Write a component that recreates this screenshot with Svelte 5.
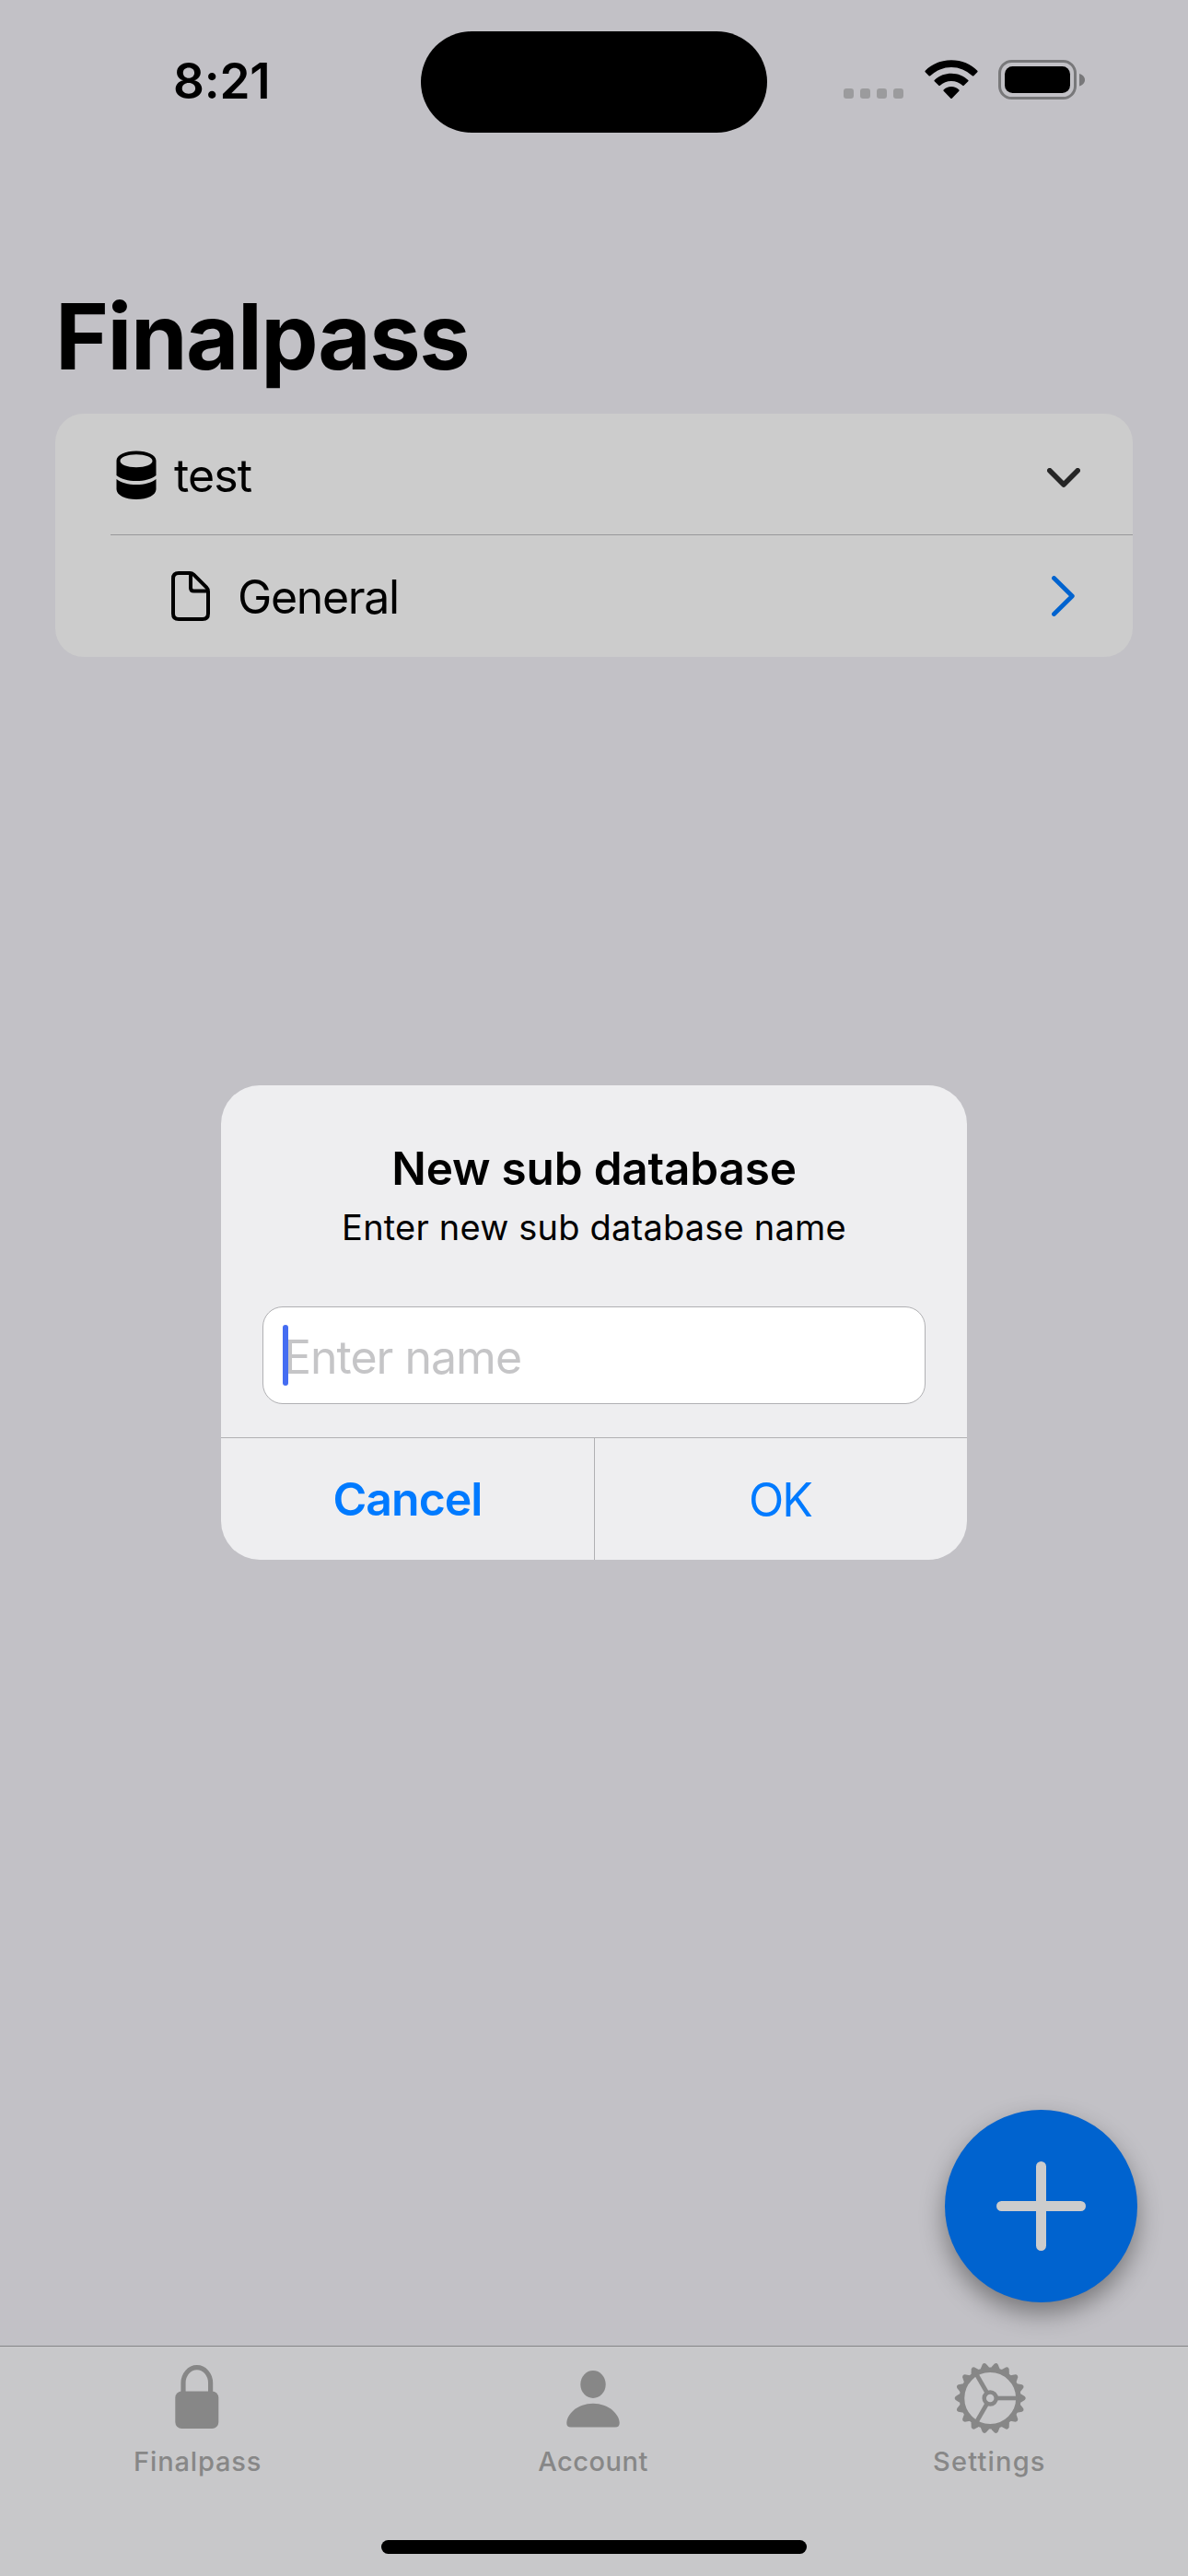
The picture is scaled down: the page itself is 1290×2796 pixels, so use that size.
<script>
  const tabs = ['Finalpass', 'Account', 'Settings'];
  const teeth = Array.from({ length: 18 }, (_, i) => i * 20);
  const spokes = [0, 120, 240];
</script>

<main class="screen">
  <header class="status">
    <time class="clock">8:21</time>
    <div class="island"></div>
    <div class="indicators">
      <svg class="cell" viewBox="0 0 65 11">
        {#each [0, 18, 36, 54] as x}
          <rect {x} y="0" width="11" height="11" rx="3.2" />
        {/each}
      </svg>
      <svg class="wifi" viewBox="0 0 58 43">
        <path d="M29 .2C40.300 .2 50.500 4.600 57.300 11.700Q58 12.500 57.300 13.200L53.400 17.200Q52.600 18 51.800 17.200A33 33 0 0 0 6.200 17.200Q5.400 18 4.600 17.200L.7 13.200Q0 12.500 .7 11.700C7.500 4.600 17.700 .2 29 .2Z" />
        <path d="M29 14.700C36.300 14.700 42.800 17.500 47.300 21.900Q48 22.600 47.300 23.300L42.700 27.800Q42 28.500 41.200 27.800A17.800 17.800 0 0 0 16.800 27.800Q16 28.500 15.300 27.800L10.700 23.300Q10 22.600 10.700 21.900C15.200 17.500 21.700 14.700 29 14.700Z" />
        <path d="M29 29C32.300 29 35.300 30.300 37.400 32.400Q38 33 37.400 33.700L29.700 41.700Q29 42.300 28.300 41.700L20.600 33.700Q20 33 20.600 32.400C22.700 30.300 25.700 29 29 29Z" />
      </svg>
      <svg class="battery" viewBox="0 0 94 43">
        <rect x="1.500" y="1.500" width="82" height="40" rx="13" fill="none" stroke="#78787a" stroke-width="3" />
        <rect x="7" y="7" width="71" height="29" rx="8.500" />
        <path d="M88 15C91.500 16 94 18.500 94 21.700S91.500 27.400 88 28.500Z" fill="#78787a" />
      </svg>
    </div>
  </header>

  <h1>Finalpass</h1>

  <section class="card">
    <div class="row">
      <svg class="database" viewBox="0 0 44 53">
        <path fill-rule="evenodd" d="M.5 11C.5 5 10 .5 22 .5S43.500 5 43.500 11V27C38 31 31 33 22 33S6 31 .5 27ZM22 4.200C12 4.200 4.500 7.200 4.500 11.200S12 18.200 22 18.200 39.500 15.200 39.500 11.200 32 4.200 22 4.200Z" />
        <path d="M.5 31C6 35 13 37 22 37S38 35 43.500 31V42C43.500 48.500 34 53 22 53S.5 48.500 .5 42Z" />
      </svg>
      <span class="label">test</span>
      <svg class="down" viewBox="0 0 36 21">
        <path d="M2.800 2.800L18 18L33.200 2.800" />
      </svg>
    </div>
    <hr />
    <div class="row child">
      <svg class="document" viewBox="0 0 42 54">
        <path d="M8 2H20Q22.500 2 24.300 3.700L38.300 17.700Q40 19.400 40 22V46Q40 52 34 52H8Q2 52 2 46V8Q2 2 8 2Z" />
        <path d="M21 3V18Q21 21.500 24.500 21.500H39" />
      </svg>
      <span class="label">General</span>
      <svg class="next" viewBox="0 0 25 44">
        <path d="M2.500 2.500L22.300 22L2.500 41.500" />
      </svg>
    </div>
  </section>

  <button class="add" aria-label="Add">
    <svg viewBox="0 0 97 97"><path d="M48.500 5.500V91.500M5.500 48.500H91.500" /></svg>
  </button>

  <nav>
    {#each tabs as tab}
      <a href="#{tab}" class="tab {tab.toLowerCase()}">
        {#if tab === 'Finalpass'}
          <svg viewBox="0 0 84 84">
            <path d="M26 36V23.500A14.800 16.800 0 0 1 55.600 23.500V36" fill="none" stroke="currentColor" stroke-width="5.200" />
            <rect x="17.300" y="32.500" width="47" height="40.500" rx="7" />
          </svg>
        {:else if tab === 'Account'}
          <svg viewBox="0 0 84 84">
            <ellipse cx="42" cy="25" rx="13.700" ry="15" />
            <path d="M18 71.500Q13.300 71.500 13.300 67C13.300 57.500 25 45.700 42 45.700S70.700 57.500 70.700 67Q70.700 71.500 66 71.500Z" />
          </svg>
        {:else}
          <svg viewBox="0 0 84 84">
            <g transform="translate(43.200 40)">
              {#each teeth as angle}
                <path d="M31 -5.200L34 -4.200L37.500 -2Q39.500 0 37.500 2L34 4.200L31 5.200Z" transform="rotate({angle})" />
              {/each}
              <circle r="30.700" class="line ring" />
              <circle r="6.500" class="line hub" />
              {#each spokes as angle}
                <path d="M7.500 0H30" class="line spoke" transform="rotate({angle})" />
              {/each}
            </g>
          </svg>
        {/if}
        <span>{tab}</span>
      </a>
    {/each}
    <div class="home"></div>
  </nav>

  <div class="alert" role="dialog">
    <div class="message">
      <h2>New sub database</h2>
      <p>Enter new sub database name</p>
      <div class="field"><i class="caret"></i><span>Enter name</span></div>
    </div>
    <div class="actions">
      <button class="cancel">Cancel</button>
      <button class="ok">OK</button>
    </div>
  </div>
</main>

<style>
  :global(body) {
    background: #c2c1c6;
  }

  * {
    box-sizing: border-box;
  }

  .screen {
    position: relative;
    display: flex;
    flex-direction: column;
    width: 1290px;
    height: 2796px;
    overflow: hidden;
    background: #c2c1c6;
    color: #000;
    font-family: Inter, 'Liberation Sans', sans-serif;
  }

  svg {
    display: block;
    flex: none;
  }

  button {
    border: 0;
    padding: 0;
    background: none;
    font: inherit;
  }

  .status {
    display: grid;
    grid-template-columns: 457px 376px 457px;
    height: 177px;
    padding-top: 33px;
  }

  .clock {
    padding: 25px 0 0 188px;
    font-size: 53px;
    font-weight: 600;
    line-height: 60px;
    letter-spacing: -0.2px;
  }

  .island {
    height: 110px;
    margin-top: 1px;
    border-radius: 55px;
    background: #000;
  }

  .indicators {
    display: flex;
    align-items: flex-start;
    padding: 32px 0 0 83px;
  }

  .cell {
    width: 65px;
    height: 11px;
    margin: 31px 23px 0 0;
    fill: #9b9b9d;
  }

  .wifi {
    width: 58px;
    height: 43px;
    margin-right: 22px;
  }

  .battery {
    width: 94px;
    height: 43px;
  }

  h1 {
    margin: 128px 0 24px 60px;
    font-size: 99px;
    font-weight: 700;
    line-height: 120px;
    letter-spacing: -1.5px;
  }

  .card {
    width: 1170px;
    margin: 0 60px;
    border-radius: 31px;
    background: #ccc;
  }

  .row {
    display: flex;
    align-items: center;
    height: 131px;
    padding: 0 57px 0 66px;
  }

  .child {
    height: 132px;
    padding: 0 63px 0 126px;
  }

  .label {
    flex: 1;
    padding-top: 2px;
    font-size: 50px;
    line-height: 60px;
    letter-spacing: -0.9px;
  }

  .child .label {
    letter-spacing: -1.33px;
  }

  .database {
    width: 44px;
    height: 53px;
    margin: 2px 19px 0 0;
  }

  .document {
    width: 42px;
    height: 54px;
    margin-right: 30px;
    fill: none;
    stroke: #000;
    stroke-width: 4;
    stroke-linejoin: round;
  }

  .down,
  .next {
    fill: none;
    stroke-linecap: round;
    stroke-linejoin: round;
  }

  .down {
    width: 36px;
    height: 21px;
    margin-top: 8px;
    stroke: #262626;
    stroke-width: 5.6;
  }

  .next {
    width: 25px;
    height: 44px;
    stroke: #0063cf;
    stroke-width: 4.8;
  }

  hr {
    height: 1px;
    margin: 0 0 0 60px;
    border: 0;
    background: #98989a;
  }

  .add {
    display: grid;
    place-items: center;
    width: 209px;
    height: 209px;
    margin: auto 55px 47px auto;
    border-radius: 50%;
    background: #0063cf;
    box-shadow: 0 12px 27px rgba(0, 0, 0, 0.38);
  }

  .add svg {
    width: 97px;
    height: 97px;
    stroke: #ccc;
    stroke-width: 11;
    stroke-linecap: round;
  }

  nav {
    position: relative;
    display: grid;
    grid-template-columns: repeat(3, 1fr);
    align-content: start;
    height: 250px;
    padding: 14px 2px 0 0;
    border-top: 1px solid #858587;
    background: #c8c8ca;
    color: #878787;
  }

  .tab {
    display: flex;
    flex-direction: column;
    align-items: center;
    color: inherit;
    text-decoration: none;
    font-size: 29px;
    font-weight: 500;
    line-height: 36px;
  }

  .tab svg {
    width: 84px;
    height: 84px;
    margin: 2px 0 7px;
    fill: currentColor;
  }

  .finalpass {
    letter-spacing: 0.85px;
  }

  .account {
    letter-spacing: 0.5px;
  }

  .settings {
    padding-left: 2px;
    letter-spacing: 1.2px;
  }

  .tab .line {
    fill: none;
    stroke: currentColor;
  }

  .ring {
    stroke-width: 5.5;
  }

  .hub {
    stroke-width: 4.5;
  }

  .spoke {
    stroke-width: 4.6;
  }

  .home {
    position: absolute;
    bottom: 24px;
    left: 414px;
    width: 462px;
    height: 15px;
    border-radius: 8px;
    background: #000;
  }

  .alert {
    position: absolute;
    top: 1178px;
    left: 240px;
    width: 810px;
    height: 515px;
    border-radius: 42px;
    overflow: hidden;
    background: #eeeef0;
    text-align: center;
  }

  .message {
    height: 383px;
    padding: 60px 45px 0;
    border-bottom: 1px solid #b0b0b3;
  }

  h2 {
    margin: 0;
    font-size: 49.5px;
    font-weight: 600;
    line-height: 60px;
    letter-spacing: -0.2px;
  }

  p {
    margin: 9px 0 61px;
    font-size: 38px;
    line-height: 50px;
    letter-spacing: 0.2px;
  }

  .field {
    display: flex;
    align-items: center;
    height: 106px;
    padding-left: 21px;
    border: 1px solid #b0b0b3;
    border-radius: 22px;
    background: #fff;
    color: #c5c5c7;
    font-size: 50px;
    line-height: 60px;
    letter-spacing: -1px;
  }

  .field span {
    padding-top: 3px;
  }

  .caret {
    position: relative;
    width: 6px;
    height: 66px;
    margin-right: -5px;
    border-radius: 3px;
    background: #456df2;
  }

  .actions {
    display: grid;
    grid-template-columns: 405px 1fr;
    height: 132px;
  }

  .actions button {
    color: #007aff;
    font-size: 50px;
    letter-spacing: -1px;
  }

  .actions .cancel {
    font-weight: 600;
  }

  .actions .ok {
    padding: 2px 2px 0 0;
    border-left: 1px solid #b0b0b3;
    letter-spacing: -2px;
  }
</style>
